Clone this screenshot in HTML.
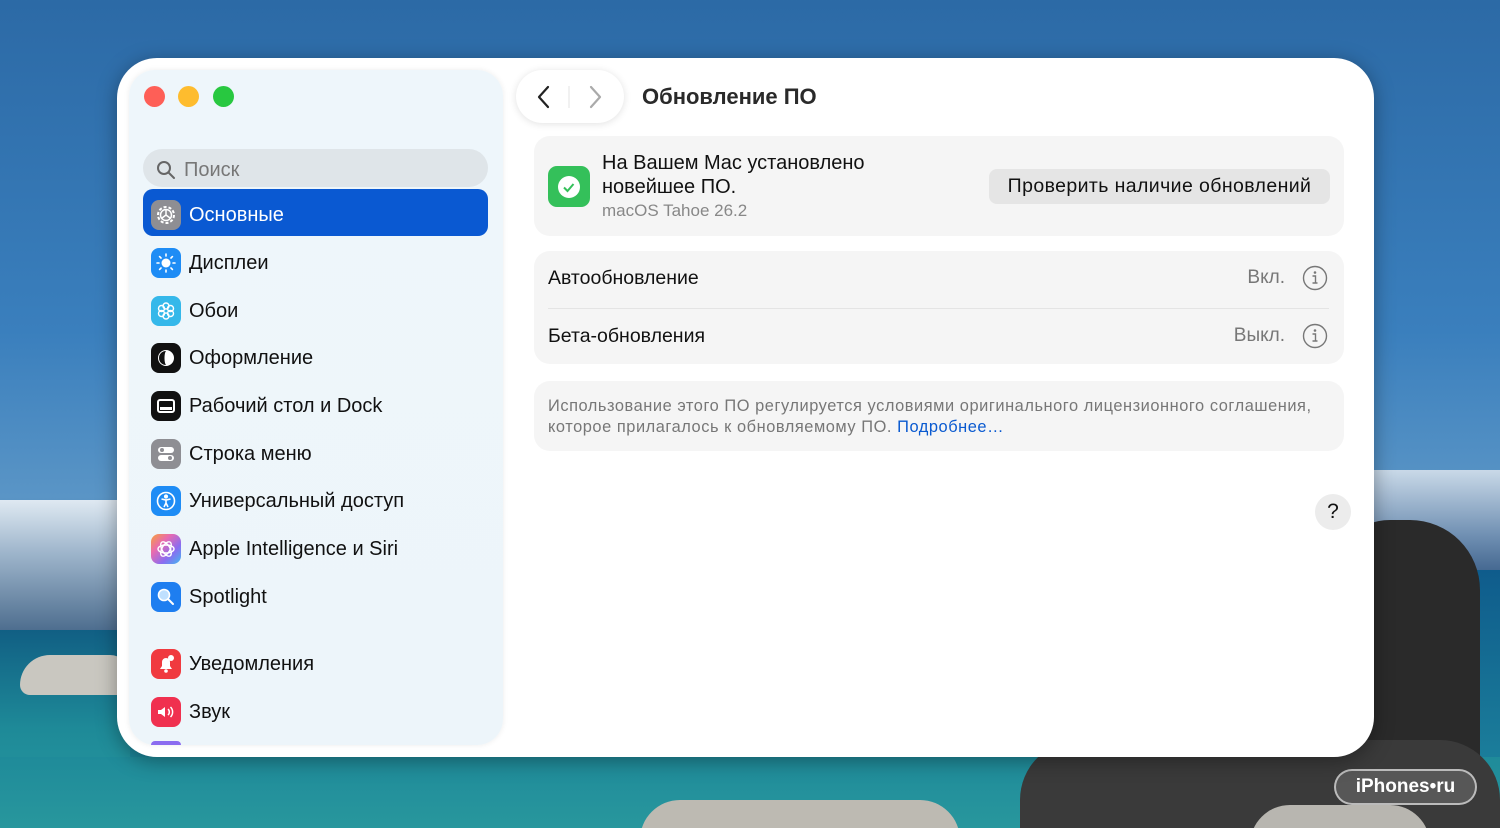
<!DOCTYPE html>
<html><head><meta charset="utf-8"><style>
*{margin:0;padding:0;box-sizing:border-box}
html,body{width:1500px;height:828px;overflow:hidden}
body{position:relative;font-family:"Liberation Sans","DejaVu Sans",sans-serif;
background:linear-gradient(180deg,#2c6aa6 0%,#3a7fbd 40%,#5a95c6 60%,#2a5f8c 75%,#1d7f98 80%,#1c8a9a 100%)}
.abs{position:absolute}
.win{left:117px;top:58px;width:1257px;height:699px;background:#fff;border-radius:40px;box-shadow:0 4px 20px rgba(0,0,0,.35)}
.side{left:129px;top:70px;width:374px;height:675px;background:linear-gradient(180deg,#eef6fb,#edf5fa);border-radius:26px;box-shadow:0 0 6px rgba(0,0,0,.08)}
.dot{width:21px;height:21px;border-radius:50%;top:86px}
.item{position:absolute;left:151px;height:30px;display:flex;align-items:center;font-size:20px;color:#111}
.ic{width:30px;height:30px;border-radius:8px;margin-right:8px;display:flex;align-items:center;justify-content:center;flex:none}
.panel{background:#f5f5f5;border-radius:16px;left:534px;width:810px}
</style></head><body>
<div class="abs" style="left:0;top:500px;width:130px;height:130px;background:linear-gradient(180deg,#dfe9f2 0%,#9fb6cc 40%,#4e6e8f 100%)"></div>
<div class="abs" style="left:0;top:630px;width:130px;height:198px;background:linear-gradient(180deg,#115f84,#1e8a98 50%,#2a9aa0)"></div>
<div class="abs" style="left:20px;top:655px;width:110px;height:40px;background:#c9c7c0;border-radius:60px 40px 10px 20px"></div>
<div class="abs" style="left:1374px;top:470px;width:126px;height:110px;background:linear-gradient(180deg,#c9d9e8,#6f8fb2 60%,#3a5e88)"></div>
<div class="abs" style="left:1374px;top:570px;width:126px;height:258px;background:linear-gradient(180deg,#0f5c8c,#1f8aa0)"></div>
<div class="abs" style="left:1330px;top:520px;width:150px;height:308px;background:#2a2a2a;border-radius:60px 70px 20px 20px"></div>
<div class="abs" style="left:0;top:757px;width:1500px;height:71px;background:linear-gradient(180deg,#1f8b9a,#28979d)"></div>
<div class="abs" style="left:1020px;top:740px;width:480px;height:88px;background:#3a3a3a;border-radius:60px 60px 0 0"></div>
<div class="abs" style="left:640px;top:800px;width:320px;height:40px;background:#bdbab2;border-radius:80px 80px 0 0"></div>
<div class="abs" style="left:1250px;top:805px;width:180px;height:40px;background:#b8b6b0;border-radius:60px 60px 0 0"></div>
<div class="abs" style="left:1334px;top:769px;width:143px;height:36px;border:2px solid rgba(255,255,255,.6);border-radius:18px;background:rgba(255,255,255,.15);color:#fff;font-weight:bold;font-size:19px;text-align:center;line-height:32px">iPhones•ru</div>

<div class="abs win"></div>
<div class="abs side"></div>
<div class="abs dot" style="left:144px;background:#fe5f57"></div>
<div class="abs dot" style="left:178px;background:#febc2e"></div>
<div class="abs dot" style="left:213px;background:#28c840"></div>
<div class="abs" style="left:143px;top:149px;width:345px;height:38px;border-radius:19px;background:#dfe5e9;display:flex;align-items:center;padding-left:13px;padding-top:4px;font-size:20px;color:#777">
<svg width="20" height="20" viewBox="0 0 20 20" style="margin-right:8px"><circle cx="8" cy="8" r="6" fill="none" stroke="#666" stroke-width="2"/><path d="M12.5 12.5L18 18" stroke="#666" stroke-width="2" stroke-linecap="round"/></svg>Поиск</div>
<div class="abs" style="left:143px;top:189px;width:345px;height:47px;border-radius:10px;background:#0a59d2"></div>

<div class="item" style="top:200px;color:#fff"><div class="ic" style="background:#8e8e93"><svg width="22" height="22" viewBox="0 0 22 22"><circle cx="11" cy="11" r="8" fill="none" stroke="#fff" stroke-width="2" stroke-dasharray="3 2"/><circle cx="11" cy="11" r="5.5" fill="none" stroke="#fff" stroke-width="1.5"/><path d="M11 11V6M11 11l4 3M11 11l-4 3" stroke="#fff" stroke-width="1.5"/></svg></div>Основные</div>
<div class="item" style="top:248px"><div class="ic" style="background:#1e8cf5"><svg width="22" height="22" viewBox="0 0 22 22"><circle cx="11" cy="11" r="4.5" fill="#fff"/><g stroke="#fff" stroke-width="1.6" stroke-linecap="round"><path d="M11 2v2M11 18v2M2 11h2M18 11h2M4.6 4.6l1.4 1.4M16 16l1.4 1.4M4.6 17.4L6 16M16 6l1.4-1.4"/></g></svg></div>Дисплеи</div>
<div class="item" style="top:296px"><div class="ic" style="background:#35b8ea"><svg width="22" height="22" viewBox="0 0 22 22" fill="none" stroke="#fff" stroke-width="1.4"><circle cx="11" cy="6" r="3"/><circle cx="11" cy="16" r="3"/><circle cx="6.5" cy="8.5" r="3"/><circle cx="15.5" cy="8.5" r="3"/><circle cx="6.5" cy="13.5" r="3"/><circle cx="15.5" cy="13.5" r="3"/></svg></div>Обои</div>
<div class="item" style="top:343px"><div class="ic" style="background:#111"><svg width="22" height="22" viewBox="0 0 22 22"><circle cx="11" cy="11" r="8" fill="#fff"/><path d="M11 4a7 7 0 0 0 0 14c-2-2-2-12 0-14z" fill="#111"/></svg></div>Оформление</div>
<div class="item" style="top:391px"><div class="ic" style="background:#111"><svg width="22" height="22" viewBox="0 0 22 22"><rect x="3" y="5" width="16" height="12" rx="2" fill="none" stroke="#fff" stroke-width="2"/><rect x="5" y="12" width="12" height="3" fill="#fff"/></svg></div>Рабочий стол и Dock</div>
<div class="item" style="top:439px"><div class="ic" style="background:#8e8e93"><svg width="22" height="22" viewBox="0 0 22 22"><rect x="3" y="4" width="16" height="6" rx="3" fill="#fff"/><rect x="3" y="12" width="16" height="6" rx="3" fill="#fff"/><circle cx="7" cy="7" r="2" fill="#8e8e93"/><circle cx="15" cy="15" r="2" fill="#8e8e93"/></svg></div>Строка меню</div>
<div class="item" style="top:486px"><div class="ic" style="background:#1e8cf5"><svg width="22" height="22" viewBox="0 0 22 22" fill="none" stroke="#fff" stroke-width="1.6"><circle cx="11" cy="11" r="8.5"/><circle cx="11" cy="6.5" r="1.3" fill="#fff"/><path d="M6.5 9l4.5 1 4.5-1M11 10v3l-2 4M11 13l2 4"/></svg></div>Универсальный доступ</div>
<div class="item" style="top:534px"><div class="ic" style="background:linear-gradient(135deg,#f7a13a,#e86bb0,#8b6cf0,#42b8f0)"><svg width="22" height="22" viewBox="0 0 22 22" fill="none" stroke="#fff" stroke-width="1.4"><ellipse cx="11" cy="11" rx="8" ry="4"/><ellipse cx="11" cy="11" rx="8" ry="4" transform="rotate(60 11 11)"/><ellipse cx="11" cy="11" rx="8" ry="4" transform="rotate(120 11 11)"/></svg></div>Apple Intelligence и Siri</div>
<div class="item" style="top:582px"><div class="ic" style="background:#1e7ef0"><svg width="22" height="22" viewBox="0 0 22 22"><circle cx="9" cy="9" r="5.5" fill="#bfe0ff" stroke="#fff" stroke-width="1.6"/><path d="M13 13l5 5" stroke="#fff" stroke-width="2" stroke-linecap="round"/></svg></div>Spotlight</div>
<div class="item" style="top:649px"><div class="ic" style="background:#f03a3f"><svg width="22" height="22" viewBox="0 0 22 22" fill="#fff"><path d="M5 16h12l-2-3V9a4 4 0 0 0-8 0v4z"/><circle cx="11" cy="18" r="1.8"/><circle cx="16" cy="5" r="3"/></svg></div>Уведомления</div>
<div class="item" style="top:697px"><div class="ic" style="background:#f0304f"><svg width="22" height="22" viewBox="0 0 22 22"><path d="M3 9h3l4-3v10l-4-3H3z" fill="#fff"/><path d="M13 8a4 4 0 0 1 0 6M15.5 6a7 7 0 0 1 0 10" stroke="#fff" stroke-width="1.5" fill="none"/></svg></div>Звук</div>
<div class="abs" style="left:151px;top:741px;width:30px;height:4px;background:#8b6cf0;border-radius:8px 8px 0 0"></div>

<div class="abs" style="left:516px;top:70px;width:108px;height:53px;border-radius:27px;background:#fff;box-shadow:0 1px 8px rgba(0,0,0,.12)"></div>
<svg class="abs" style="left:534px;top:84px" width="80" height="26" viewBox="0 0 80 26"><path d="M14 3L5 13l9 10" fill="none" stroke="#222" stroke-width="2.2" stroke-linecap="round" stroke-linejoin="round"/><path d="M35 2v22" stroke="#e3e3e3"/><path d="M57 3l9 10-9 10" fill="none" stroke="#aaa" stroke-width="2.2" stroke-linecap="round" stroke-linejoin="round"/></svg>
<div class="abs" style="left:642px;top:84px;font-size:22px;font-weight:bold;color:#2a2a2a">Обновление ПО</div>

<div class="abs panel" style="top:136px;height:100px"></div>
<div class="abs" style="left:548px;top:166px;width:42px;height:41px;border-radius:9px;background:#34c05a;display:flex;align-items:center;justify-content:center"><svg width="24" height="24" viewBox="0 0 24 24"><circle cx="12" cy="12" r="11" fill="#fff"/><path d="M7 12.5l3.5 3.5 6-7" fill="none" stroke="#34c05a" stroke-width="2"/></svg></div>
<div class="abs" style="left:602px;top:151px;font-size:20px;color:#111;line-height:24px">На Вашем Mac установлено<br>новейшее ПО.</div>
<div class="abs" style="left:602px;top:201px;font-size:17px;color:#888">macOS Tahoe 26.2</div>
<div class="abs" style="left:989px;top:169px;width:341px;height:35px;border-radius:8px;background:#e5e5e5;font-size:19.5px;letter-spacing:.4px;color:#111;text-align:center;line-height:35px">Проверить наличие обновлений</div>

<div class="abs panel" style="top:251px;height:113px"></div>
<div class="abs" style="left:548px;top:308px;width:781px;height:1px;background:#e4e4e4"></div>
<div class="abs" style="left:548px;top:267px;font-size:19.5px;color:#111">Автообновление</div>
<div class="abs" style="left:548px;top:325px;font-size:19.5px;color:#111">Бета-обновления</div>
<div class="abs" style="left:1200px;top:267px;width:85px;text-align:right;font-size:19px;color:#777">Вкл.</div>
<div class="abs" style="left:1190px;top:325px;width:95px;text-align:right;font-size:19px;color:#777">Выкл.</div>
<svg class="abs" style="left:1302px;top:265px" width="26" height="26" viewBox="0 0 26 26"><circle cx="13" cy="13" r="11.5" fill="none" stroke="#777" stroke-width="1.4"/><circle cx="13" cy="7.5" r="1.3" fill="#777"/><path d="M10.5 11h3v7M10.5 18h5" stroke="#777" stroke-width="1.4" fill="none"/></svg>
<svg class="abs" style="left:1302px;top:323px" width="26" height="26" viewBox="0 0 26 26"><circle cx="13" cy="13" r="11.5" fill="none" stroke="#777" stroke-width="1.4"/><circle cx="13" cy="7.5" r="1.3" fill="#777"/><path d="M10.5 11h3v7M10.5 18h5" stroke="#777" stroke-width="1.4" fill="none"/></svg>

<div class="abs panel" style="top:381px;height:70px"></div>
<div class="abs" style="left:548px;top:396px;font-size:16.4px;color:#777;line-height:21px;letter-spacing:.55px;white-space:nowrap">Использование этого ПО регулируется условиями оригинального лицензионного соглашения,<br>которое прилагалось к обновляемому ПО. <span style="color:#0a5ad0">Подробнее…</span></div>

<div class="abs" style="left:1315px;top:494px;width:36px;height:36px;border-radius:50%;background:#ececec;font-size:21px;color:#111;text-align:center;line-height:36px">?</div>
</body></html>
